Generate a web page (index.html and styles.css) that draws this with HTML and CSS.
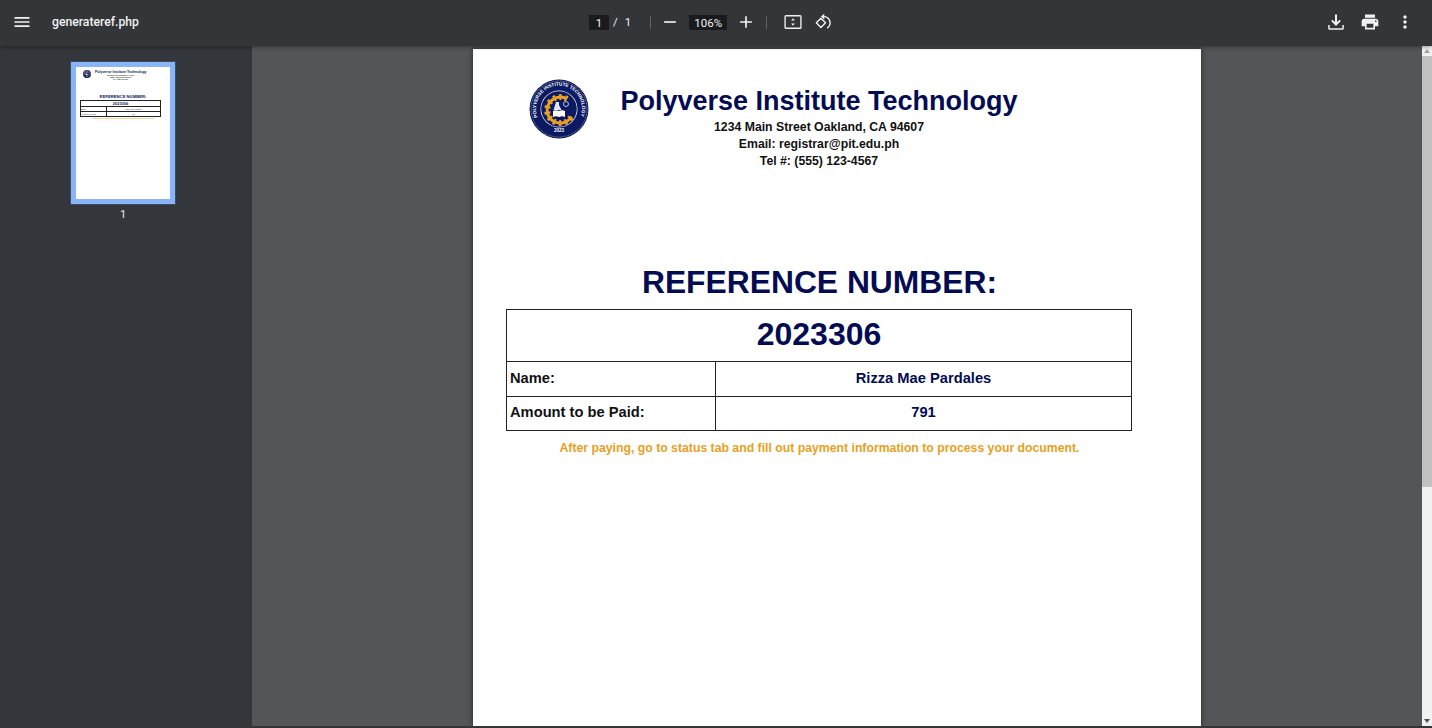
FILE: index.html
```html
<!DOCTYPE html>
<html>
<head>
    <title>generateref.php</title>
    <link rel="stylesheet" href="styles.css">
</head>
<body>
    <svg class="defs" width="0" height="0">
        <defs>
            <path id="ring-text" d="M 9 39 A 23 23 0 1 1 51 39"/>
            <symbol id="seal" viewBox="0 0 60 60">
                <circle cx="30" cy="30" r="29.5" fill="#0b1a63"/>
                <circle cx="30" cy="30" r="28" fill="none" stroke="#c9b98a" stroke-width="0.6" stroke-dasharray="1 0.6"/>
                <circle cx="30" cy="30" r="18.500" fill="#f4f2ea"/>
                <circle cx="30" cy="30" r="17.800" fill="#0b1a63"/>
                <text class="seal-text"><textPath href="#ring-text" startOffset="1%">POLYVERSE INSTITUTE TECHNOLOGY</textPath></text>
                <text class="seal-year" x="30" y="53" text-anchor="middle">2023</text>
                <path d="M38 20a13 13 0 1 0 4.500 17.500" fill="none" stroke="#e9a023" stroke-width="3"/>
                <path d="M38 20a13 13 0 1 0 4.500 17.500" fill="none" stroke="#e9a023" stroke-width="6" stroke-dasharray="2.400 3.400"/>
                <path d="M24 32c2-1 4-1 6 0 2-1 4-1 6 0v6c-2-1-4-1-6 0-2-1-4-1-6 0z" fill="#fff"/>
                <path d="M27 23h3v3l2.500 5h-8z" fill="#dfe6f5"/>
                <circle cx="37" cy="25" r="2.500" fill="none" stroke="#dfe6f5" stroke-width="0.8"/>
            </symbol>
        </defs>
    </svg>

    <header class="toolbar">
        <div class="toolbar-left">
            <svg class="icon" viewBox="0 0 24 24"><path d="M3 18h18v-2H3v2zm0-5h18v-2H3v2zm0-7v2h18V6H3z"/></svg>
            <span class="file-name">generateref.php</span>
        </div>
        <div class="toolbar-center">
            <span class="field page-field">1</span>
            <span class="page-sep">/</span>
            <span class="page-total">1</span>
            <span class="divider first-divider"></span>
            <svg class="icon minus" viewBox="0 0 24 24"><path d="M5 11h14v2H5z"/></svg>
            <span class="field zoom-field">106%</span>
            <svg class="icon plus" viewBox="0 0 24 24"><path d="M19 13h-6v6h-2v-6H5v-2h6V5h2v6h6z"/></svg>
            <span class="divider second-divider"></span>
            <svg class="icon fit" viewBox="0 0 24 24">
                <rect x="2.500" y="4.500" width="19" height="15" rx="1" fill="none" stroke="#f1f1f1" stroke-width="1.600"/>
                <path d="M12 7.500l2.200 2.700H9.800zM12 16.500l-2.200-2.700h4.400z"/>
            </svg>
            <svg class="icon rotate" viewBox="0 0 24 24">
                <path d="M9.500 7.500L4 13l5.500 5.500L15 13z" fill="none" stroke="#f1f1f1" stroke-width="1.700" stroke-linejoin="round"/>
                <path d="M11 5.500h2.500a7.500 7.500 0 0 1 3.500 13.800" fill="none" stroke="#f1f1f1" stroke-width="1.700"/>
                <path d="M13.500 2v7l-4-3.500z"/>
            </svg>
        </div>
        <div class="toolbar-right">
            <svg class="icon" viewBox="0 0 24 24">
                <path d="M12 3v11M7 10l5 5 5-5" fill="none" stroke="#f1f1f1" stroke-width="2.400"/>
                <path d="M3.500 15.500v4a1 1 0 0 0 1 1h15a1 1 0 0 0 1-1v-4" fill="none" stroke="#f1f1f1" stroke-width="1.800"/>
            </svg>
            <svg class="icon" viewBox="0 0 24 24"><path d="M19 8H5c-1.660 0-3 1.340-3 3v6h4v4h12v-4h4v-6c0-1.660-1.340-3-3-3zm-3 11H8v-5h8v5zm3-7c-.55 0-1-.45-1-1s.45-1 1-1 1 .45 1 1-.45 1-1 1zm-1-9H6v4h12V3z"/></svg>
            <svg class="icon more" viewBox="0 0 24 24"><path d="M12 8c1.100 0 2-.9 2-2s-.9-2-2-2-2 .9-2 2 .9 2 2 2zm0 2c-1.100 0-2 .9-2 2s.9 2 2 2 2-.9 2-2-.9-2-2-2zm0 6c-1.100 0-2 .9-2 2s.9 2 2 2 2-.9 2-2-.9-2-2-2z"/></svg>
        </div>
    </header>

    <div class="viewer">
        <aside class="sidebar">
            <div class="thumb">
                <div class="thumb-page">
                    <div class="thumb-head">
                        <svg class="thumb-seal"><use href="#seal"/></svg>
                        <div class="thumb-lines">
                            <div class="thumb-title">Polyverse Institute Technology</div>
                            <div class="thumb-line">1234 Main Street Oakland, CA 94607</div>
                            <div class="thumb-line">Email: registrar@pit.edu.ph</div>
                            <div class="thumb-line">Tel #: (555) 123-4567</div>
                        </div>
                    </div>
                    <div class="thumb-ref">REFERENCE NUMBER:</div>
                    <div class="thumb-table">
                        <div class="thumb-num">2023306</div>
                        <div class="thumb-row"><span>Name:</span><span>Rizza Mae Pardales</span></div>
                        <div class="thumb-row"><span>Amount to be Paid:</span><span>791</span></div>
                    </div>
                    <div class="thumb-note">After paying, go to status tab and fill out payment information to process your document.</div>
                </div>
            </div>
            <div class="thumb-label">1</div>
        </aside>

        <main class="stage">
            <section class="page">
                <div class="letterhead">
                    <svg class="seal"><use href="#seal"/></svg>
                    <div class="school">
                        <h1>Polyverse Institute Technology</h1>
                        <p>1234 Main Street Oakland, CA 94607</p>
                        <p>Email: registrar@pit.edu.ph</p>
                        <p>Tel #: (555) 123-4567</p>
                    </div>
                </div>

                <h2>REFERENCE NUMBER:</h2>
                <table class="ref-table">
                    <colgroup>
                        <col class="label-col">
                        <col>
                    </colgroup>
                    <tr>
                        <td colspan="2" class="ref-number">2023306</td>
                    </tr>
                    <tr>
                        <th>Name:</th>
                        <td>Rizza Mae Pardales</td>
                    </tr>
                    <tr>
                        <th>Amount to be Paid:</th>
                        <td>791</td>
                    </tr>
                </table>
                <p class="note">After paying, go to status tab and fill out payment information to process your document.</p>
            </section>
        </main>

        <div class="scrollbar">
            <span class="arrow-up"></span>
            <div class="scroll-thumb"></div>
            <div class="scroll-track"></div>
            <span class="arrow-down"></span>
        </div>
    </div>
</body>
</html>
```

FILE: styles.css
```css
html, body {
    height: 100%;
}
body {
    margin: 0;
    display: flex;
    flex-direction: column;
    overflow: hidden;
    background-color: #323639;
    font-family: "Liberation Sans", Arial, sans-serif;
}
.defs {
    position: absolute;
}
.seal-text {
    font: bold 4.700px "Liberation Sans", sans-serif;
    fill: #fff;
}
.seal-year {
    font: bold 4.500px "Liberation Sans", sans-serif;
    fill: #fff;
}

/* toolbar */
.toolbar {
    height: 46px;
    flex: none;
    display: flex;
    align-items: center;
    padding-bottom: 2px;
    box-sizing: border-box;
    background-color: #323639;
    color: #f1f1f1;
    position: relative;
    z-index: 2;
    box-shadow: 0 1px 4px rgba(0, 0, 0, 0.4);
    font-family: Roboto, sans-serif;
}
.icon {
    width: 20px;
    height: 20px;
    fill: #f1f1f1;
    flex: none;
}
.toolbar-left {
    width: 589px;
    flex: none;
    display: flex;
    align-items: center;
    padding-left: 12px;
    box-sizing: border-box;
}
.file-name {
    margin-left: 20px;
    font-size: 12.200px;
    font-weight: 500;
}
.toolbar-center {
    display: flex;
    align-items: center;
    font-size: 11.500px;
}
.field {
    height: 15px;
    line-height: 16px;
    background-color: #191b1c;
    text-align: center;
}
.page-field {
    width: 20px;
}
.page-sep {
    margin-left: 4px;
}
.page-total {
    margin-left: 7px;
}
.divider {
    width: 1px;
    height: 13px;
    background-color: #5f6368;
}
.first-divider {
    margin-left: 19px;
}
.minus {
    margin-left: 9px;
}
.zoom-field {
    width: 38px;
    margin-left: 9px;
}
.plus {
    margin-left: 9px;
}
.second-divider {
    margin-left: 10px;
}
.fit {
    margin-left: 16px;
}
.rotate {
    margin-left: 10px;
}
.toolbar-right {
    margin-left: auto;
    padding-right: 17px;
    display: flex;
    align-items: center;
    gap: 14px;
}
.more {
    margin-left: 1px;
}

/* main area */
.viewer {
    flex: 1;
    min-height: 0;
    display: flex;
    margin-bottom: 2px;
}
.sidebar {
    width: 252px;
    flex: none;
    background-color: #33363b;
    padding-top: 16px;
    box-sizing: border-box;
}
.thumb {
    width: 94px;
    height: 132px;
    border: 5px solid #8ab4f8;
    margin-left: 71px;
    box-shadow: 0 0 0 1px #3f4a5e;
}
.thumb-page {
    height: 100%;
    background-color: #fff;
    color: #0b1a63;
    overflow: hidden;
    padding-top: 3px;
    box-sizing: border-box;
}
.thumb-head {
    display: flex;
    padding-left: 7px;
}
.thumb-seal {
    width: 8px;
    height: 8px;
    flex: none;
}
.thumb-lines {
    width: 51px;
    margin-left: 4px;
    text-align: center;
    white-space: nowrap;
}
.thumb-title {
    font-size: 3.500px;
    line-height: 5px;
    font-weight: bold;
}
.thumb-line {
    font-size: 1.600px;
    line-height: 2px;
    font-weight: bold;
    color: #222;
}
.thumb-ref {
    margin-top: 13px;
    font-size: 4.200px;
    line-height: 6px;
    font-weight: bold;
    text-align: center;
}
.thumb-table {
    width: 81px;
    margin: 0 0 0 4px;
    border: 1px solid #222;
    border-bottom: 0;
    box-sizing: border-box;
}
.thumb-num {
    height: 6px;
    box-sizing: border-box;
    font-size: 4px;
    line-height: 5px;
    font-weight: bold;
    text-align: center;
    border-bottom: 1px solid #222;
}
.thumb-row {
    display: grid;
    grid-template-columns: 26px 1fr;
    height: 5px;
    box-sizing: border-box;
    font-size: 1.800px;
    line-height: 4px;
    text-align: center;
    border-bottom: 1px solid #222;
}
.thumb-row span:first-child {
    text-align: left;
    border-right: 1px solid #222;
    color: #222;
}
.thumb-note {
    font-size: 1.500px;
    line-height: 3px;
    font-weight: bold;
    text-align: center;
    color: #e9a023;
}
.thumb-label {
    margin-top: 4px;
    width: 246px;
    text-align: center;
    font-family: Roboto, sans-serif;
    font-size: 11px;
    color: #e8eaed;
}

.stage {
    flex: 1;
    min-width: 0;
    background-color: #525659;
    display: flex;
    justify-content: center;
    padding-top: 3px;
    overflow: hidden;
}
.page {
    width: 728px;
    flex: none;
    background-color: #fff;
    box-shadow: 0 0 5px rgba(0, 0, 0, 0.6);
    padding: 30px 69px 0 34px;
    box-sizing: border-box;
}
.letterhead {
    display: flex;
    padding-left: 22px;
}
.seal {
    width: 60px;
    height: 60px;
    flex: none;
}
.school {
    width: 398px;
    margin-left: 31px;
    text-align: center;
    font-weight: bold;
    color: #111;
    white-space: nowrap;
}
.school h1 {
    margin: 4px 0 0;
    font-size: 27px;
    line-height: 36px;
    color: #030c52;
}
.school p {
    margin: 0;
    font-size: 12.250px;
    line-height: 17px;
}
h2 {
    margin: 92px 0 0;
    font-size: 31.800px;
    line-height: 41px;
    text-align: center;
    color: #030c52;
}
.ref-table {
    width: 626px;
    margin: 6px 0 0 -1px;
    border-collapse: collapse;
    table-layout: fixed;
}
.label-col {
    width: 209px;
}
.ref-table th, .ref-table td {
    border: 1px solid #222;
    height: 34.500px;
    padding: 0 3px 2px;
    font-size: 14.700px;
    font-weight: bold;
    box-sizing: border-box;
}
.ref-table th {
    text-align: left;
    color: #111;
}
.ref-table td {
    text-align: center;
    color: #030c52;
}
.ref-table .ref-number {
    height: 52px;
    font-size: 32px;
}
.note {
    margin: 9px 0 0;
    text-align: center;
    font-size: 12.250px;
    line-height: 17px;
    font-weight: bold;
    color: #e9a023;
}

/* scrollbar */
.scrollbar {
    width: 10px;
    flex: none;
    display: flex;
    flex-direction: column;
    background-color: #f1f1f1;
}
.arrow-up, .arrow-down {
    height: 10px;
    flex: none;
    position: relative;
}
.arrow-up::after, .arrow-down::after {
    content: "";
    position: absolute;
    left: 2px;
    top: 3px;
    border-left: 3px solid transparent;
    border-right: 3px solid transparent;
}
.arrow-up::after {
    border-bottom: 4px solid #a3a3a3;
}
.arrow-down::after {
    border-top: 4px solid #505050;
}
.scroll-thumb {
    height: 431px;
    flex: none;
    background-color: #c1c1c1;
}
.scroll-track {
    flex: 1;
}
```
